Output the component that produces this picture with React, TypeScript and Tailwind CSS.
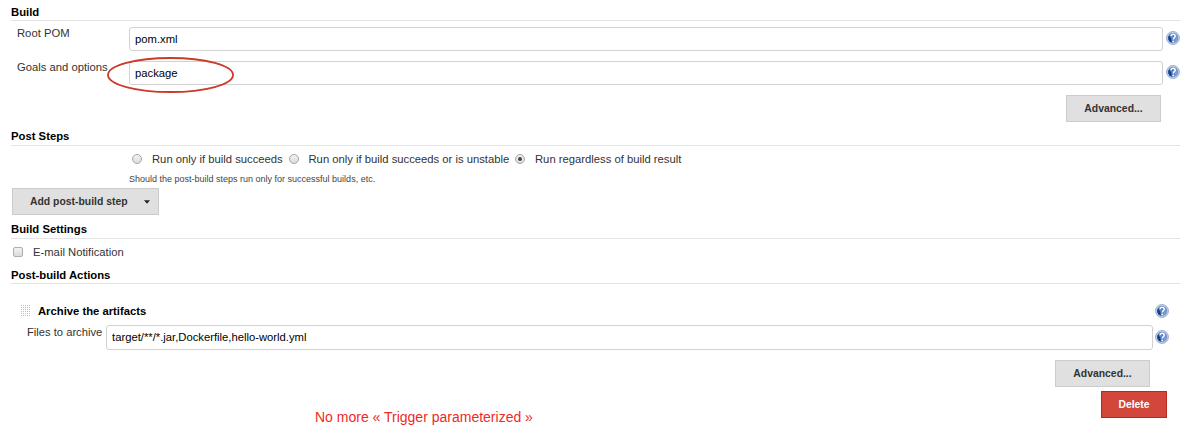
import type { ReactNode } from "react";

function Heading({ children, className = "" }: { children: ReactNode; className?: string }) {
  return (
    <h2 className={`ml-[11px] w-[1169px] border-b border-[#e4e4e4] text-[11.3px] font-bold leading-[16px] text-black ${className}`}>
      {children}
    </h2>
  );
}

function Help() {
  return (
    <svg className="size-[14px] shrink-0" viewBox="0 0 14 14" role="img" aria-label="Help">
      <circle cx="7" cy="7" r="6.4" fill="#c3d3ea" stroke="#8ba3ca" strokeWidth="0.9" />
      <circle cx="7" cy="7" r="5" fill="#5a80bc" />
      <path d="M3.2 4.2A5 5 0 0 0 5.8 11.8L5.2 7.4 4.3 6.2z" fill="#123f88" />
      <path d="M9.4 3.5Q12 5.5 11.3 9L9 11.4 8.6 8.7 10.2 6.5z" fill="#7d9dce" />
      <path d="M5.1 5.3Q5.3 3.3 7.2 3.3T9.2 5.2C9.2 6.6 7.3 6.7 7.3 8.5" fill="none" stroke="#fff" strokeWidth="1.5" />
      <circle cx="7.3" cy="10.4" r="0.95" fill="#fff" />
    </svg>
  );
}

function Field({ value, className }: { value: string; className: string }) {
  return (
    <div className={`flex shrink-0 items-center rounded-[3px] border border-[#d2d2d2] bg-white pl-[5px] text-[11.25px] text-black ${className}`}>
      {value}
    </div>
  );
}

function Button({ children, className = "" }: { children: ReactNode; className?: string }) {
  return (
    <button className={`flex h-[27px] items-center whitespace-nowrap border border-[#cccccc] bg-[#e0e0e0] text-[10.4px] font-bold text-[#333] ${className}`}>
      {children}
    </button>
  );
}

function Radio({ label, checked = false, className }: { label: string; checked?: boolean; className: string }) {
  return (
    <label className={`flex shrink-0 items-center whitespace-nowrap text-[11.25px] leading-[16px] ${className}`}>
      <span className="mr-[10px] flex size-[10px] items-center justify-center rounded-full border border-[#a5a5a5] bg-linear-to-b from-[#f2f2f2] to-[#dcdcdc]">
        {checked && <span className="size-[4px] rounded-full bg-[#444]" />}
      </span>
      {label}
    </label>
  );
}

function Grip() {
  return (
    <svg className="mr-[7px] h-[12px] w-[10px]" viewBox="0 0 10 12">
      {[0, 2, 4, 6, 8, 10].map((y) =>
        [0, 2, 4, 6, 8].map((x) => <rect key={`${x}-${y}`} x={x} y={y} width="1" height="1" fill="#bdbdbd" />),
      )}
    </svg>
  );
}

export default function App() {
  return (
    <main className="relative h-[437px] w-[1195px] overflow-hidden bg-white font-['Liberation_Sans',Arial,sans-serif] text-[#333]">
      <Heading className="mt-[4px]">Build</Heading>
      <div className="mt-[6px] flex h-[24px] pl-[17px]">
        <span className="w-[112px] text-[11.25px] leading-[13px]">Root POM</span>
        <Field value="pom.xml" className="mr-[3px] h-[24px] w-[1034px]" />
        <div className="pt-[4px]"><Help /></div>
      </div>
      <div className="mt-[10px] flex h-[24px] pl-[17px]">
        <span className="w-[112px] whitespace-nowrap text-[11.25px] leading-[13px]">Goals and options</span>
        <Field value="package" className="mr-[3px] h-[24px] w-[1034px]" />
        <div className="pt-[4px]"><Help /></div>
      </div>
      <Button className="mt-[10px] ml-[1066px] w-[95px] justify-center">Advanced...</Button>

      <Heading className="mt-[6px] pb-px">Post Steps</Heading>
      <div className="mt-[5px] flex pl-[132px]">
        <Radio label="Run only if build succeeds" className="w-[156.5px]" />
        <Radio label="Run only if build succeeds or is unstable" className="w-[226.5px]" />
        <Radio label="Run regardless of build result" checked className="w-[180px]" />
      </div>
      <p className="mt-[5px] ml-[129px] text-[9px] leading-[14px] text-[#444]">Should the post-build steps run only for successful builds, etc.</p>
      <Button className="mt-[2px] ml-[12px] w-[147px] pl-[17px]">
        Add post-build step
        <svg className="ml-[16px] h-[4px] w-[6px]" viewBox="0 0 6 4"><path d="M0 .3h6L3 3.7z" fill="#222" /></svg>
      </Button>

      <Heading className="mt-[6px] pb-px">Build Settings</Heading>
      <label className="mt-[5px] ml-[13px] flex h-[16px] items-center text-[11.25px]">
        <span className="mr-[10px] size-[10px] rounded-[2px] border border-[#adadad] bg-linear-to-b from-[#f2f2f2] to-[#dcdcdc]" />
        E-mail Notification
      </label>
      <Heading className="mt-[7px]">Post-build Actions</Heading>

      <div className="mt-[19px] flex h-[16px] items-center pl-[21px]">
        <Grip />
        <h3 className="w-[1117px] text-[11.25px] font-bold text-black">Archive the artifacts</h3>
        <Help />
      </div>
      <div className="mt-[6px] flex h-[25px] pl-[27px]">
        <span className="w-[79px] whitespace-nowrap text-[11.2px] leading-[14px]">Files to archive</span>
        <Field value="target/**/*.jar,Dockerfile,hello-world.yml" className="mr-[2px] h-[25px] w-[1047px]" />
        <div className="pt-[5px]"><Help /></div>
      </div>
      <Button className="mt-[10px] ml-[1055px] w-[95px] justify-center">Advanced...</Button>
      <div className="mt-[4px] flex items-start">
        <p className="mt-[17px] ml-[315px] w-[786px] text-[14px] leading-[18px] text-[#f02a1d]">No more « Trigger parameterized »</p>
        <button className="flex h-[27px] w-[66px] items-center justify-center border border-[#b52a20] bg-[#d3473b] text-[10.4px] font-bold text-white">Delete</button>
      </div>

      <svg className="absolute top-[56px] left-[106px] h-[38px] w-[130px]" viewBox="0 0 130 38">
        <ellipse cx="64.5" cy="19" rx="62.5" ry="17" fill="none" stroke="#cb3a2b" strokeWidth="1.8" />
      </svg>
    </main>
  );
}
